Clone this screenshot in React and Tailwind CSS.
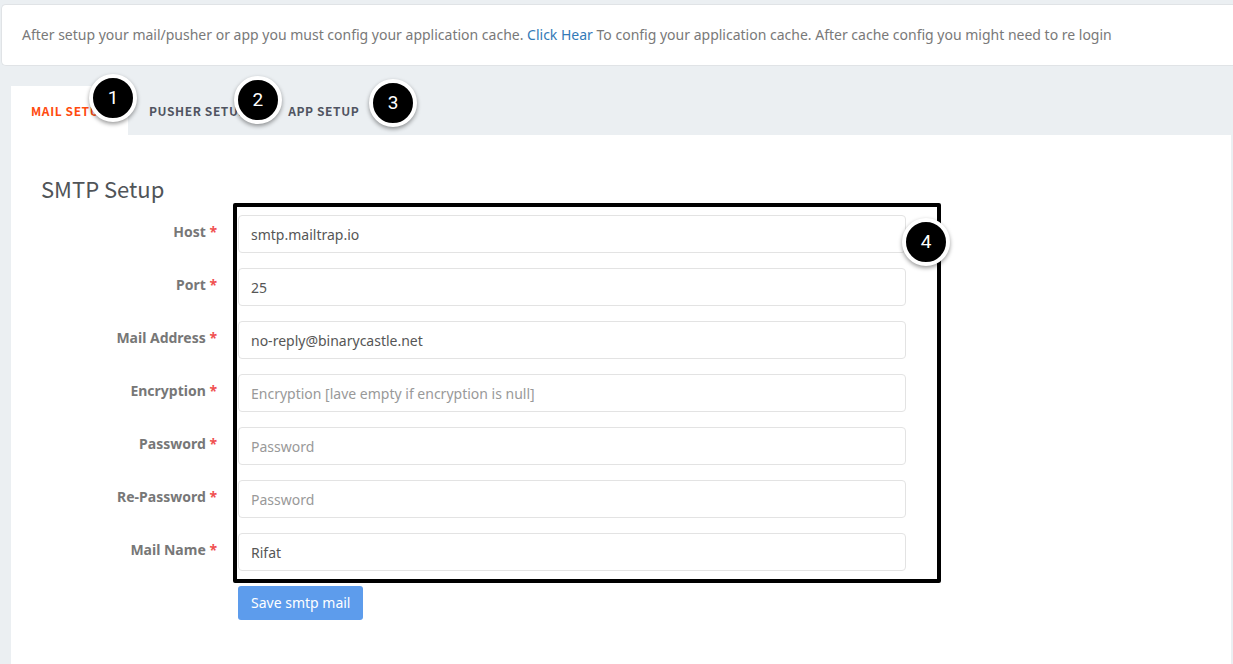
import { useState } from "react";

const TABS = [
  { id: "mail", label: "Mail Setup", marker: 1, markerClass: "left-[78px] -top-3" },
  { id: "pusher", label: "Pusher Setup", marker: 2, markerClass: "left-[105px] -top-[10px]" },
  { id: "app", label: "App Setup", marker: 3, markerClass: "left-[101px] -top-[7px]" },
];

const FIELDS = [
  { id: "host", label: "Host", type: "text", value: "smtp.mailtrap.io" },
  { id: "port", label: "Port", type: "text", value: "25" },
  { id: "address", label: "Mail Address", type: "text", value: "no-reply@binarycastle.net" },
  {
    id: "encryption",
    label: "Encryption",
    type: "text",
    placeholder: "Encryption [lave empty if encryption is null]",
  },
  { id: "password", label: "Password", type: "password", placeholder: "Password" },
  { id: "rePassword", label: "Re-Password", type: "password", placeholder: "Password" },
  { id: "name", label: "Mail Name", type: "text", value: "Rifat" },
];

function Marker({ number, className }) {
  return (
    <span
      className={`pointer-events-none absolute z-10 flex h-12 w-12 items-center justify-center rounded-full border-4 border-white bg-black pb-[2px] font-['Roboto',sans-serif] text-[19px] leading-none text-white shadow-[0_2px_4px_rgba(0,0,0,0.4)] ${className}`}
    >
      {number}
    </span>
  );
}

function Field({ field }) {
  return (
    <div className="grid grid-cols-[176px_minmax(0,1fr)] gap-x-[21px]">
      <label htmlFor={field.id} className="pt-[7px] text-right font-bold text-[#777]">
        {field.label} <span className="text-[#f05050]">*</span>
      </label>
      <input
        id={field.id}
        type={field.type}
        defaultValue={field.value}
        placeholder={field.placeholder}
        className="h-[38px] w-full rounded border border-[#e3e3e3] bg-white px-3 text-[#565656] outline-none placeholder:text-[#999] focus:border-[#aaa]"
      />
    </div>
  );
}

function SmtpForm() {
  return (
    <form onSubmit={(event) => event.preventDefault()}>
      <h2 className="font-['Noto_Sans_CJK_SC',sans-serif] text-[22px] leading-[26px] text-[#505458]">
        SMTP Setup
      </h2>

      <div className="relative mt-[14px] flex max-w-[865px] flex-col gap-[15px]">
        {FIELDS.map((field) => (
          <Field key={field.id} field={field} />
        ))}
        <span className="pointer-events-none absolute -top-3 -right-[35px] -bottom-3 left-[192px] rounded-xs border-4 border-black" />
        <Marker number={4} className="-right-[44px] top-[3px]" />
      </div>

      <button
        type="submit"
        className="mt-[15px] ml-[197px] h-[34px] rounded-[3px] bg-[#5d9cec] px-[13px] text-white"
      >
        Save smtp mail
      </button>
    </form>
  );
}

export default function App() {
  const [active, setActive] = useState("mail");

  return (
    <div className="flex min-h-screen flex-col overflow-x-hidden bg-[#ebeff2] pt-1 font-['Noto_Sans',sans-serif] text-sm text-[#797979]">
      <div className="ml-px rounded-l-[5px] border border-r-0 border-[#e0e3e6] bg-white px-5 py-5">
        <p>
          After setup your mail/pusher or app you must config your application cache.{" "}
          <a href="#config" className="text-[#337ab7]">
            Click Hear
          </a>{" "}
          To config your application cache. After cache config you might need to re login
        </p>
      </div>

      <main className="mt-5 mr-[2px] ml-[11px] flex grow flex-col">
        <div role="tablist" className="flex gap-px">
          {TABS.map((tab) => (
            <div key={tab.id} className="relative">
              <button
                type="button"
                role="tab"
                aria-selected={active === tab.id}
                onClick={() => setActive(tab.id)}
                className={`h-[49px] px-5 font-['Noto_Sans_CJK_SC',sans-serif] text-xs font-bold tracking-wider uppercase ${
                  active === tab.id ? "bg-white text-[#ff4b0f]" : "text-[#505461]"
                }`}
              >
                {tab.label}
              </button>
              <Marker number={tab.marker} className={tab.markerClass} />
            </div>
          ))}
        </div>

        <div role="tabpanel" className="grow bg-white px-[30px] pt-10 pb-11">
          <SmtpForm />
        </div>
      </main>
    </div>
  );
}
